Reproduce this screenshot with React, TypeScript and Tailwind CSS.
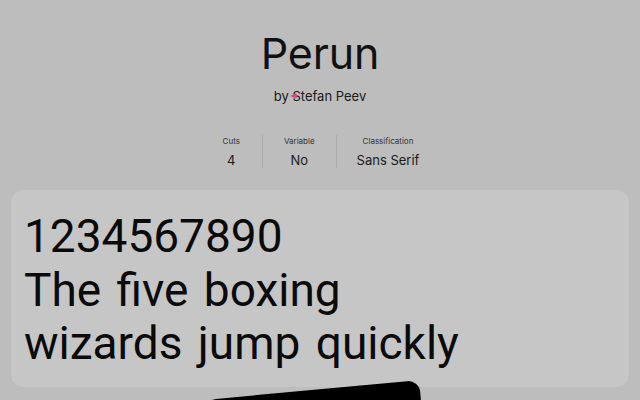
import React from "react";

export default function App() {
  return (
    <div className="relative w-[640px] h-[400px] overflow-hidden bg-[#bdbdbd] text-[#111]" style={{ fontFamily: "Inter, 'Noto Sans', sans-serif" }}>
      <div className="flex flex-col items-center pt-[25px]">
        <h1 className="text-[43px] leading-[56px] font-normal tracking-[-0.2px] text-[#111]">Perun</h1>
        <div className="relative mt-[6px] text-[13px] leading-[18px] text-[#1a1a1a]">
          by Stefan Peev
          <svg className="absolute left-[16px] top-[6px]" width="8" height="6" viewBox="0 0 8 6">
            <path d="M0 3 L6 0.5 Q8 3 6 5.5 Z" fill="#e0457b" />
          </svg>
        </div>
        <div className="mt-[30px] flex items-stretch">
          <div className="flex flex-col items-center px-[22px]">
            <span className="text-[8px] leading-[12px] text-[#333]">Cuts</span>
            <span className="mt-[5px] text-[13px] leading-[16px] text-[#1a1a1a]">4</span>
          </div>
          <div className="w-px bg-[#adadad]" />
          <div className="flex flex-col items-center px-[21px]">
            <span className="text-[8px] leading-[12px] text-[#333]">Variable</span>
            <span className="mt-[5px] text-[13px] leading-[16px] text-[#1a1a1a]">No</span>
          </div>
          <div className="w-px bg-[#adadad]" />
          <div className="flex flex-col items-center px-[20px]">
            <span className="text-[8px] leading-[12px] text-[#333]">Classification</span>
            <span className="mt-[5px] text-[13px] leading-[16px] text-[#1a1a1a]">Sans Serif</span>
          </div>
        </div>
      </div>
      <div className="mx-[11px] mt-[22px] h-[197px] rounded-[12px] bg-[#c6c6c6] px-[13px] pt-[20px]">
        <p className="text-[46px] leading-[53.5px] text-[#0a0a0a] [word-spacing:4px]" style={{ fontFamily: "Roboto, 'Noto Sans', sans-serif" }}>
          1234567890
          <br />
          The five boxing
          <br />
          wizards jump quickly
        </p>
      </div>
      <div className="absolute left-[204px] top-[400px] h-[100px] w-[216px] origin-top-left rotate-[-5.3deg] rounded-[12px] bg-black" />
    </div>
  );
}
